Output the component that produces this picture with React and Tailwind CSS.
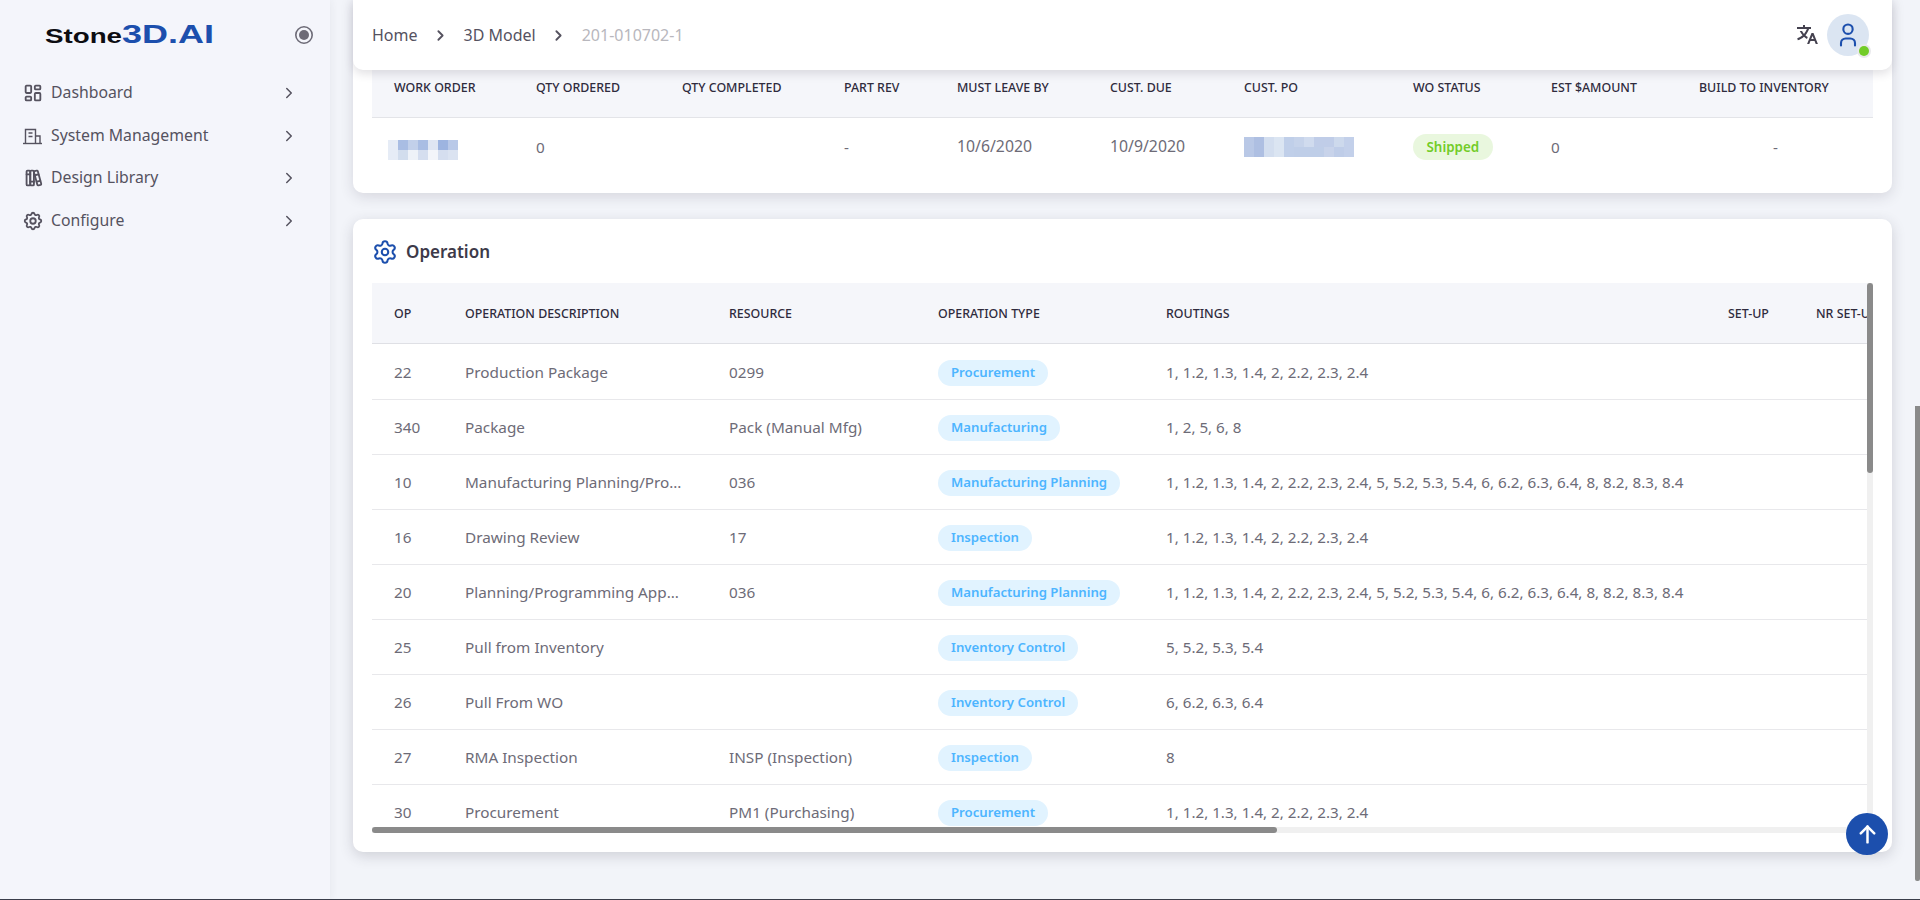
import { TbLayoutDashboard, TbBooks, TbSettings, TbChevronRight, TbUser, TbArrowUp } from "react-icons/tb";
import { RiTranslate2 } from "react-icons/ri";
import { Settings } from "lucide-react";

function BuildingIcon({ size, className }) {
  return (
    <svg width={size} height={size} viewBox="0 0 22 22" fill="none" stroke="currentColor" strokeWidth="1.4" className={className}>
      <path d="M1 18.5h19" />
      <path d="M3.5 18.5V4.5h10v14" />
      <path d="M6.5 8h4M6.5 11.5h4" />
      <path d="M13.5 11h4.5v7.5" />
    </svg>
  );
}

const menu = [
  { label: "Dashboard", icon: TbLayoutDashboard, size: 22 },
  { label: "System Management", icon: BuildingIcon, size: 22 },
  { label: "Design Library", icon: TbBooks, size: 22 },
  { label: "Configure", icon: TbSettings, size: 22 },
];

const workHeads = [
  ["WORK ORDER", "w-[142px]"],
  ["QTY ORDERED", "w-[146px]"],
  ["QTY COMPLETED", "w-[162px]"],
  ["PART REV", "w-[113px]"],
  ["MUST LEAVE BY", "w-[153px]"],
  ["CUST. DUE", "w-[134px]"],
  ["CUST. PO", "w-[169px]"],
  ["WO STATUS", "w-[138px]"],
  ["EST $AMOUNT", "w-[148px]"],
  ["BUILD TO INVENTORY", "w-[196px]"],
];

const opHeads = [
  ["OP", "w-[71px]"],
  ["OPERATION DESCRIPTION", "w-[264px]"],
  ["RESOURCE", "w-[209px]"],
  ["OPERATION TYPE", "w-[228px]"],
  ["ROUTINGS", "w-[562px]"],
  ["SET-UP", "w-[88px]"],
  ["NR SET-UP", "w-[120px]"],
];

const longRouting = "1, 1.2, 1.3, 1.4, 2, 2.2, 2.3, 2.4, 5, 5.2, 5.3, 5.4, 6, 6.2, 6.3, 6.4, 8, 8.2, 8.3, 8.4";
const shortRouting = "1, 1.2, 1.3, 1.4, 2, 2.2, 2.3, 2.4";

const operations = [
  ["22", "Production Package", "0299", "Procurement", shortRouting],
  ["340", "Package", "Pack (Manual Mfg)", "Manufacturing", "1, 2, 5, 6, 8"],
  ["10", "Manufacturing Planning/Programming", "036", "Manufacturing Planning", longRouting],
  ["16", "Drawing Review", "17", "Inspection", shortRouting],
  ["20", "Planning/Programming Approval", "036", "Manufacturing Planning", longRouting],
  ["25", "Pull from Inventory", "", "Inventory Control", "5, 5.2, 5.3, 5.4"],
  ["26", "Pull From WO", "", "Inventory Control", "6, 6.2, 6.3, 6.4"],
  ["27", "RMA Inspection", "INSP (Inspection)", "Inspection", "8"],
  ["30", "Procurement", "PM1 (Purchasing)", "Procurement", shortRouting],
];

// censored cells in the picture, drawn as a mosaic
function Mosaic({ cols, rows, cells, className }) {
  return (
    <svg width={cols * 10} height={rows * 10} viewBox={`0 0 ${cols} ${rows}`} shapeRendering="crispEdges" className={className}>
      {cells.map((color, i) => (
        <rect key={i} x={i % cols} y={Math.floor(i / cols)} width="1" height="1" fill={color} />
      ))}
    </svg>
  );
}

const orderCells = [
  "#e6ecf6", "#a9bde3", "#c2d0ea", "#a9bde3", "#dfe6f3", "#9db4e0", "#b9c9e8",
  "#e6ecf6", "#d2dded", "#eef2f8", "#d5deef", "#f3f5fa", "#d5deef", "#dbe3f1",
];
const poCells = [
  "#b9c8e6", "#aebfe2", "#d3deef", "#dbe5f2", "#c0cfe9", "#c6d3ea", "#d0dbee", "#c0cde8", "#c0cde8", "#cdd9ec", "#c3d0ea",
  "#b9c8e6", "#aebfe2", "#d3deef", "#dbe5f2", "#c0cfe9", "#bfcee8", "#bfcee8", "#bfcee8", "#c8d3ea", "#bfcde8", "#c3d0ea",
];

function Logo() {
  return (
    <svg width="172" height="24" viewBox="0 0 172 24" className="block">
      <text x="0" y="20" textLength="77" lengthAdjust="spacingAndGlyphs" fontFamily="Liberation Sans" fontWeight="700" fontSize="19.5" fill="#0d0d12">
        Stone
      </text>
      <text x="77" y="20" textLength="92" lengthAdjust="spacingAndGlyphs" fontFamily="Liberation Sans" fontWeight="700" fontSize="25" fill="#1c4fad">
        3D.AI
      </text>
    </svg>
  );
}

function Chip({ children }) {
  return (
    <span className="inline-flex h-[26px] items-center rounded-full bg-[#e1f3ff] px-[13px] text-[13.2px] font-semibold text-[#4db5ff]">
      {children}
    </span>
  );
}

function HeadCell({ children, className }) {
  return <th className={`${className} overflow-hidden whitespace-nowrap pl-[22px] pt-[3px] text-left align-middle text-[12.4px] font-medium text-[#2f2b3d]`}>{children}</th>;
}

export default function App() {
  return (
    <div className="flex h-screen overflow-hidden bg-[#f2f4f9] font-['Noto_Sans',sans-serif] text-[15.3px] text-[#6d6b77]">
      {/* sidebar */}
      <aside className="w-[330px] shrink-0 bg-[#f4f5fb] shadow-[1px_0_8px_rgba(47,43,61,0.06)]">
        <div className="flex h-[70px] items-center justify-between pl-[45px] pr-[16px]">
          <Logo />
          <svg width="20" height="20" viewBox="0 0 20 20">
            <circle cx="10" cy="10" r="8.2" fill="none" stroke="#6d6b77" strokeWidth="1.6" />
            <circle cx="10" cy="10" r="5" fill="#6d6b77" />
          </svg>
        </div>
        <nav className="mt-[2px] flex flex-col">
          {menu.map((item) => (
            <div key={item.label} className="flex h-[42.5px] items-center pl-[22px] pr-[32px]">
              <item.icon size={item.size} className="shrink-0 text-[#55525f]" />
              <span className="ml-[7px] flex-1 text-[15.8px] text-[#55525f]">{item.label}</span>
              <TbChevronRight size={18} className="text-[#55525f]" />
            </div>
          ))}
        </nav>
      </aside>

      {/* main */}
      <main className="relative min-w-0 flex-1">
        <header className="absolute left-[23px] top-0 z-10 flex h-[70px] w-[1539px] items-center justify-between rounded-b-[10px] bg-white pl-[19px] pr-[23px] shadow-[0_4px_10px_rgba(47,43,61,0.14)]">
          <div className="flex items-center text-[16px]">
            <span className="text-[#55525f]">Home</span>
            <TbChevronRight size={17} strokeWidth={2.6} className="mx-[14.5px] text-[#55525f]" />
            <span className="text-[#55525f]">3D Model</span>
            <TbChevronRight size={17} strokeWidth={2.6} className="mx-[14.5px] text-[#55525f]" />
            <span className="text-[#b8b7bd]">201-010702-1</span>
          </div>
          <div className="flex items-center gap-[8px]">
            <RiTranslate2 size={24} className="text-[#44414f]" />
            <div className="relative flex h-[42px] w-[42px] items-center justify-center rounded-full bg-[#dbe5f2]">
              <TbUser size={28} strokeWidth={1.8} className="text-[#1c4fad]" />
              <span className="absolute bottom-0 right-0 h-[10px] w-[10px] rounded-full bg-[#72cc28] ring-2 ring-[#e9e9ec]" />
            </div>
          </div>
        </header>

        <div className="ml-[23px] mt-[-7px] flex w-[1539px] flex-col gap-[26px]">
          {/* work order card, its title is scrolled away under the header */}
          <section className="rounded-[10px] bg-white px-[19px] pb-[16px] pt-[64px] shadow-[0_4px_14px_rgba(47,43,61,0.14)]">
            <table className="w-[1501px] table-fixed border-collapse">
              <thead>
                <tr className="h-[60px] border-b border-[#e3e4e8] bg-[#f5f6fa]">
                  {workHeads.map(([text, w]) => (
                    <HeadCell key={text} className={w}>
                      {text}
                    </HeadCell>
                  ))}
                </tr>
              </thead>
              <tbody>
                <tr className="h-[60px]">
                  <td>
                    <Mosaic cols={7} rows={2} cells={orderCells} className="ml-[16px] mt-[6px]" />
                  </td>
                  <td className="pl-[22px]">0</td>
                  <td />
                  <td className="pl-[22px]">-</td>
                  <td className="pl-[22px] text-[15.8px]">10/6/2020</td>
                  <td className="pl-[22px] text-[15.8px]">10/9/2020</td>
                  <td className="pl-[22px]">
                    <Mosaic cols={11} rows={2} cells={poCells} />
                  </td>
                  <td className="pl-[22px]">
                    <span className="inline-flex h-[26px] items-center rounded-full bg-[#e9f7de] px-[13.5px] text-[13.4px] font-semibold text-[#72cc28]">Shipped</span>
                  </td>
                  <td className="pl-[22px]">0</td>
                  <td className="pl-[96px]">-</td>
                </tr>
              </tbody>
            </table>
          </section>

          {/* operation card */}
          <section className="relative h-[633px] rounded-[10px] bg-white shadow-[0_4px_14px_rgba(47,43,61,0.18)]">
            <div className="flex h-[64px] items-center gap-[8px] pl-[19px] pt-[2px]">
              <Settings size={26} strokeWidth={1.9} className="text-[#1c4fad]" />
              <h2 className="text-[17px] font-semibold text-[#3d3a49]">Operation</h2>
            </div>
            <div className="relative ml-[19px] h-[550px] w-[1501px] overflow-hidden">
              <table className="w-[1542px] table-fixed border-collapse">
                <thead>
                  <tr className="h-[60px] border-b border-[#dfe0e5] bg-[#f5f6fa]">
                    {opHeads.map(([text, w]) => (
                      <HeadCell key={text} className={w}>
                        {text}
                      </HeadCell>
                    ))}
                  </tr>
                </thead>
                <tbody>
                  {operations.map((op, i) => (
                    <tr key={op[0]} className={`${i === 0 ? "h-[56px]" : "h-[55px]"} border-b border-[#e8e8eb]`}>
                      <td className="pl-[22px] pt-[2px]">{op[0]}</td>
                      <td className="truncate pl-[22px] pr-[24px] pt-[2px]">{op[1]}</td>
                      <td className="pl-[22px] pt-[2px]">{op[2]}</td>
                      <td className="pl-[22px] pt-[3px]">
                        <Chip>{op[3]}</Chip>
                      </td>
                      <td className="whitespace-nowrap pl-[22px] pt-[2px] text-[15.2px]">{op[4]}</td>
                      <td />
                      <td />
                    </tr>
                  ))}
                </tbody>
              </table>
              {/* table scrollbars */}
              <div className="absolute right-0 top-0 h-[544px] w-[6px] bg-[#f0f0f0]">
                <div className="h-[190px] w-[6px] rounded-full bg-[#8a8a8a]" />
              </div>
              <div className="absolute bottom-0 left-0 h-[6px] w-[1501px] bg-[#f0f0f0]">
                <div className="h-[6px] w-[905px] rounded-full bg-[#8a8a8a]" />
              </div>
            </div>
            <button className="absolute bottom-[-3px] right-[4px] flex h-[42px] w-[42px] items-center justify-center rounded-full bg-[#1c4fad]">
              <TbArrowUp size={27} strokeWidth={2.2} className="text-white" />
            </button>
          </section>
        </div>

        {/* page scrollbar */}
        <div className="absolute right-0 top-0 h-full w-[5px]">
          <div className="mt-[406px] h-[475px] w-[5px] rounded-b-[2px] bg-[#8a8a8a]" />
        </div>
      </main>

      {/* bottom edge of the window */}
      <div className="absolute bottom-0 left-0 h-[1px] w-full bg-[#3a3d4a]" />
    </div>
  );
}
